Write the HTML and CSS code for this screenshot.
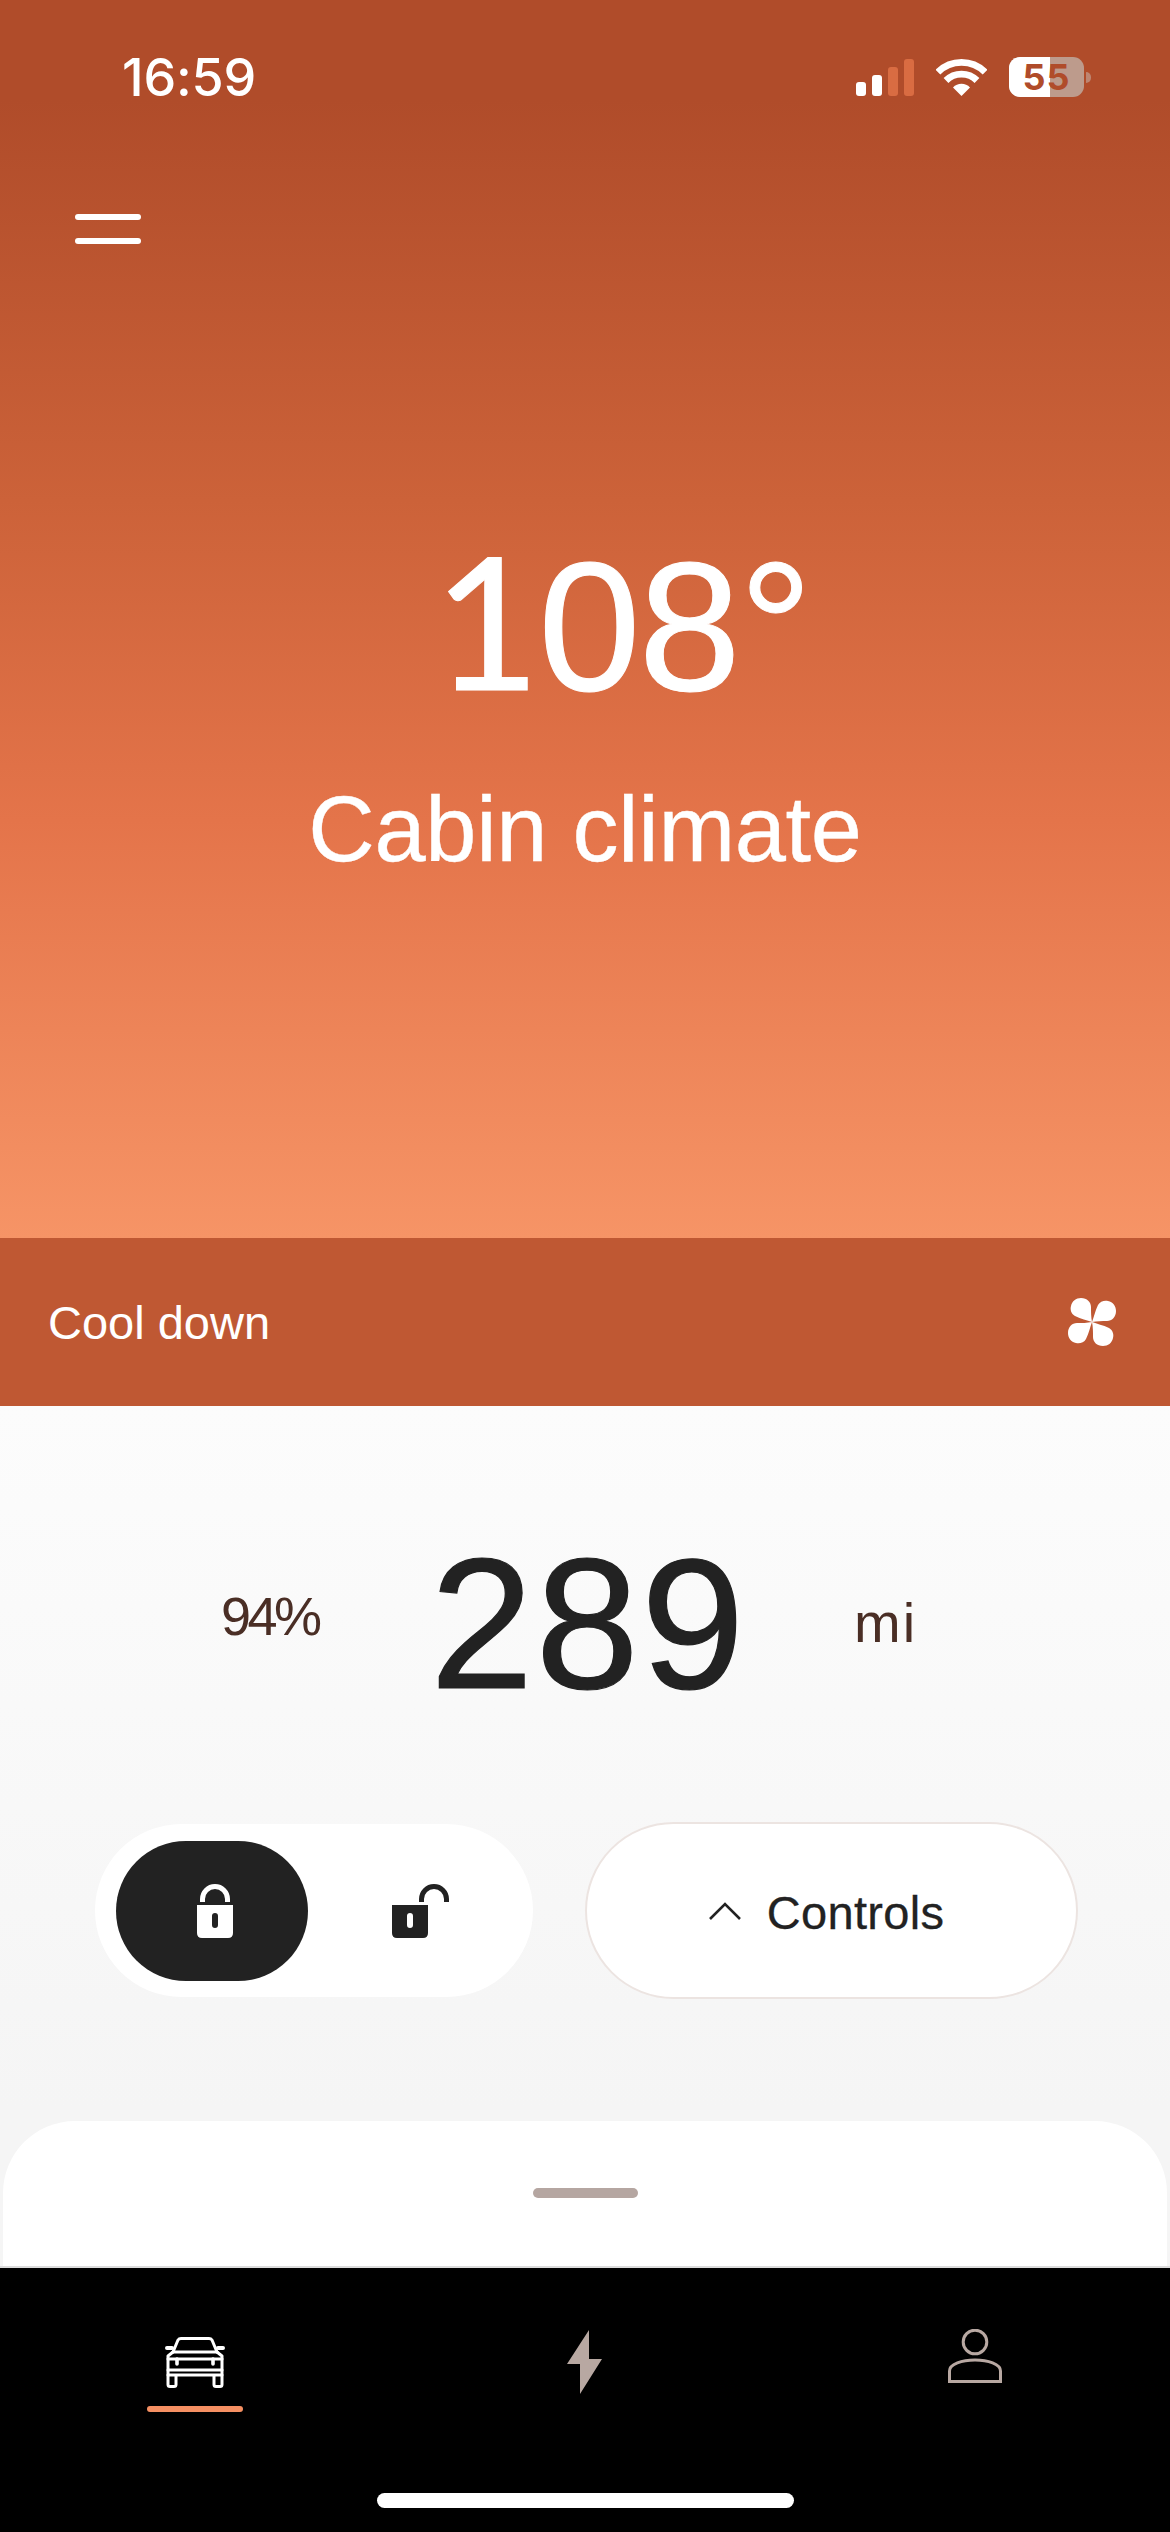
FILE: index.html
```html
<!DOCTYPE html>
<html lang="en">
<head>
<meta charset="utf-8">
<title>Cabin climate</title>
<link rel="stylesheet" href="styles.css">
</head>
<body>
<div class="app">
  <section class="hero">
    <div class="status">
      <span class="time">16:59</span>
      <div class="status-icons">
        <div class="signal"><i class="b1 on"></i><i class="b2 on"></i><i class="b3"></i><i class="b4"></i></div>
        <svg class="wifi" width="51" height="37" viewBox="0 0 51 37"><path d="M1.900 13.200A33.400 33.400 0 0 1 49.100 13.200M10 21.500A22 22 0 0 1 41 21.500" fill="none" stroke="#fff" stroke-width="6.800"/><path d="M25.500 37L17 28.400A12 12 0 0 1 34 28.400Z" fill="#fff"/></svg>
        <div class="battery"><div class="batt-body"><div class="batt-fill"></div><span class="batt-num">55</span></div><i class="batt-tip"></i></div>
      </div>
    </div>
    <div class="menu"><i></i><i></i></div>
    <div class="climate">
      <div class="temp"><span class="foot-one">1</span>08°</div>
      <div class="climate-label">Cabin climate</div>
    </div>
  </section>
  <div class="cool">
    <span class="cool-text">Cool down</span>
    <svg class="fan" width="48" height="48" viewBox="0 0 48 48"><g fill="#fff"><path d="M24 24C19 22 13 21 7 18C3 16 2 11 3 8C4 3 8 0 13 0C19 0 23 4 23 9C23 14 23 19 24 24Z"/><path d="M24 24C19 22 13 21 7 18C3 16 2 11 3 8C4 3 8 0 13 0C19 0 23 4 23 9C23 14 23 19 24 24Z" transform="rotate(90 24 24)"/><path d="M24 24C19 22 13 21 7 18C3 16 2 11 3 8C4 3 8 0 13 0C19 0 23 4 23 9C23 14 23 19 24 24Z" transform="rotate(180 24 24)"/><path d="M24 24C19 22 13 21 7 18C3 16 2 11 3 8C4 3 8 0 13 0C19 0 23 4 23 9C23 14 23 19 24 24Z" transform="rotate(270 24 24)"/></g></svg>
  </div>
  <main class="main">
    <div class="range">
      <span class="pct">94%</span>
      <span class="miles">289</span>
      <span class="unit">mi</span>
    </div>
    <div class="actions">
      <div class="lock-toggle">
        <div class="lock-opt active">
          <svg class="lock-closed" width="36" height="54" viewBox="0 0 36 54"><path d="M5.500 18V15A12.500 12.500 0 0 1 30.500 15V18" fill="none" stroke="#fff" stroke-width="5"/><path fill-rule="evenodd" d="M0 21H36V49Q36 54 31 54H5Q0 54 0 49ZM15 32V41A3 3 0 0 0 21 41V32A3 3 0 0 0 15 32Z" fill="#fff"/></svg>
        </div>
        <div class="lock-opt">
          <svg class="lock-open" width="57" height="54" viewBox="0 0 57 54"><path d="M29.500 18V15A12.500 12.500 0 0 1 54.500 15V18" fill="none" stroke="#222" stroke-width="5"/><path fill-rule="evenodd" d="M0 21H36V49Q36 54 31 54H5Q0 54 0 49ZM15 32V41A3 3 0 0 0 21 41V32A3 3 0 0 0 15 32Z" fill="#222"/></svg>
        </div>
      </div>
      <button class="controls">
        <svg width="32" height="18" viewBox="0 0 32 18"><path d="M1 17L16 2L31 17" fill="none" stroke="#222" stroke-width="2.600"/></svg>
        <span class="controls-label">Controls</span>
      </button>
    </div>
    <div class="sheet"><i class="handle"></i></div>
  </main>
  <nav class="nav">
    <div class="tabs">
      <div class="tab tab-car">
        <svg width="60" height="51" viewBox="0 0 60 51"><g fill="none" stroke="#fff" stroke-width="3" stroke-linecap="round" stroke-linejoin="round"><path d="M8 15L13 3Q14 1.500 16 1.500H44Q46 1.500 47 3L52 15"/><path d="M8 15H52"/><path d="M8 15L3 19V47.500Q3 49.500 5 49.500H9Q11 49.500 11 47.500V39M52 15L57 19V47.500Q57 49.500 55 49.500H51Q49 49.500 49 47.500V39"/><path d="M3 22H57M3 33H57M3 38H57"/><path d="M2 11H7M53 11H58" stroke-width="4"/><path d="M12 22V27M48 22V27" stroke-width="3.600"/></g></svg>
        <i class="tab-line"></i>
      </div>
      <div class="tab tab-bolt">
        <svg width="35" height="64" viewBox="0 0 35 64"><path d="M22 0V29H35L13 64V34H0Z" fill="#b8a8a2"/></svg>
      </div>
      <div class="tab tab-user">
        <svg width="54" height="54" viewBox="0 0 54 54"><circle cx="27" cy="13" r="11.800" fill="none" stroke="#b8a8a2" stroke-width="3"/><path d="M1.500 52.500V42C1.500 35 14 31 27 31S52.500 35 52.500 42V52.500Z" fill="none" stroke="#b8a8a2" stroke-width="3"/></svg>
      </div>
    </div>
    <i class="home"></i>
  </nav>
</div>
</body>
</html>
```
FILE: styles.css
```css
* { box-sizing: border-box; }
html, body { margin: 0; padding: 0; }
body { width: 1170px; height: 2532px; overflow: hidden; font-family: "Liberation Sans", Arial, sans-serif; background: #000; }
i { display: block; }
.app { display: flex; flex-direction: column; width: 1170px; height: 2532px; }

.hero { height: 1238px; padding-top: 57px; display: flex; flex-direction: column; color: #fff;
  background: linear-gradient(180deg, #b04c2a 0, #b04c2a 100px, #cc6239 500px, #e4744a 820px, #f69466 1238px); }
.status { display: flex; justify-content: space-between; height: 40px; padding: 0 79px 0 122px; }
.time { font-family: "Inter", sans-serif; font-size: 52px; font-weight: 500; line-height: 42px; letter-spacing: -0.2px; }
.status-icons { display: flex; align-items: flex-end; }
.signal { display: flex; align-items: flex-end; gap: 6px; margin-bottom: 1px; margin-right: 22px; }
.signal i { width: 10px; border-radius: 3px; background: #d96c42; }
.signal i.on { background: #fff; }
.b1 { height: 14px; } .b2 { height: 21px; } .b3 { height: 29px; } .b4 { height: 37px; }
.wifi { margin-bottom: 1px; margin-right: 22px; }
.battery { display: flex; align-items: center; gap: 2px; }
.batt-body { position: relative; width: 75px; height: 40px; border-radius: 11px; background: #bd9b8c; display: flex; align-items: center; justify-content: center; }
.batt-fill { position: absolute; left: 0; top: 0; bottom: 0; width: 41px; border-radius: 11px 0 0 11px; background: #fff; }
.batt-num { position: relative; font-family: "Inter", sans-serif; font-size: 36px; font-weight: 700; color: #b04c2a; line-height: 40px; letter-spacing: 1px; }
.batt-tip { width: 5px; height: 11px; border-radius: 0 6px 6px 0; background: #bd8672; }

.menu { margin: 117px 0 0 75px; display: flex; flex-direction: column; gap: 18px; width: 66px; }
.menu i { height: 6px; border-radius: 3px; background: #fff; }
.climate { margin-top: 287px; display: flex; flex-direction: column; align-items: center; }
.temp { font-size: 184px; line-height: 190px; letter-spacing: -2px; padding-left: 74px; height: 190px; -webkit-text-stroke: 1px #fff; }
.foot-one { font-family: "Lato", sans-serif; line-height: 0; }
.climate-label { margin-top: 58px; font-size: 92px; line-height: 100px; letter-spacing: -0.3px; -webkit-text-stroke: 0.4px #fff; }

.cool { height: 168px; background: #bf5833; color: #fff; display: flex; align-items: center; justify-content: space-between; padding: 0 54px 0 48px; }
.cool-text { font-size: 47px; }

.main { flex: 1; display: flex; flex-direction: column; background: linear-gradient(180deg, #fcfcfc 0, #f5f5f5 700px); padding-top: 128px; }
.range { display: flex; align-items: center; height: 180px; padding-left: 221px; }
.pct { width: 209px; font-size: 54px; letter-spacing: -3.500px; color: #4a2e25; margin-bottom: 16px; }
.miles { width: 310px; font-size: 186px; line-height: 180px; color: #222; letter-spacing: 2px; -webkit-text-stroke: 1.200px #222; }
.unit { margin-left: 114px; font-size: 56px; letter-spacing: 2px; color: #4a2e25; margin-bottom: 4px; }
.actions { display: flex; gap: 52px; margin: 110px 0 0 95px; }
.lock-toggle { display: flex; align-items: center; width: 438px; height: 173px; border-radius: 87px; background: #fff; padding: 0 21px; }
.lock-opt { display: flex; align-items: center; justify-content: center; width: 192px; height: 140px; border-radius: 70px; }
.lock-opt.active { background: #222; }
.lock-closed { margin-left: 6px; }
.lock-open { margin-left: 32px; }
.controls { display: flex; align-items: center; justify-content: center; gap: 26px; width: 493px; height: 177px; border-radius: 89px; border: 2px solid #ece4e1; background: #fff; color: #222; font-family: inherit; font-size: 47px; padding: 0 10px 0 0; margin-top: -2px; }
.controls-label { margin-top: 4px; letter-spacing: 0.3px; -webkit-text-stroke: 0.3px #222; }
.sheet { margin: 122px 3px 0; flex: 1; background: #fff; border-radius: 72px 72px 0 0; padding-top: 67px; display: flex; justify-content: center; }
.handle { width: 105px; height: 10px; border-radius: 5px; background: #b5a6a1; }

.nav { height: 266px; background: #000; border-top: 2px solid #dcdcdc; position: relative; }
.tabs { position: relative; height: 224px; }
.tab { position: absolute; display: flex; flex-direction: column; align-items: center; }
.tab-car { left: 147px; top: 69px; width: 96px; }
.tab-line { width: 96px; height: 6px; border-radius: 3px; background: #f58f62; margin-top: 18px; }
.tab-bolt { left: 567px; top: 62px; }
.tab-user { left: 948px; top: 61px; }
.home { position: absolute; left: 377px; top: 225px; width: 417px; height: 15px; border-radius: 8px; background: #fff; }
```
